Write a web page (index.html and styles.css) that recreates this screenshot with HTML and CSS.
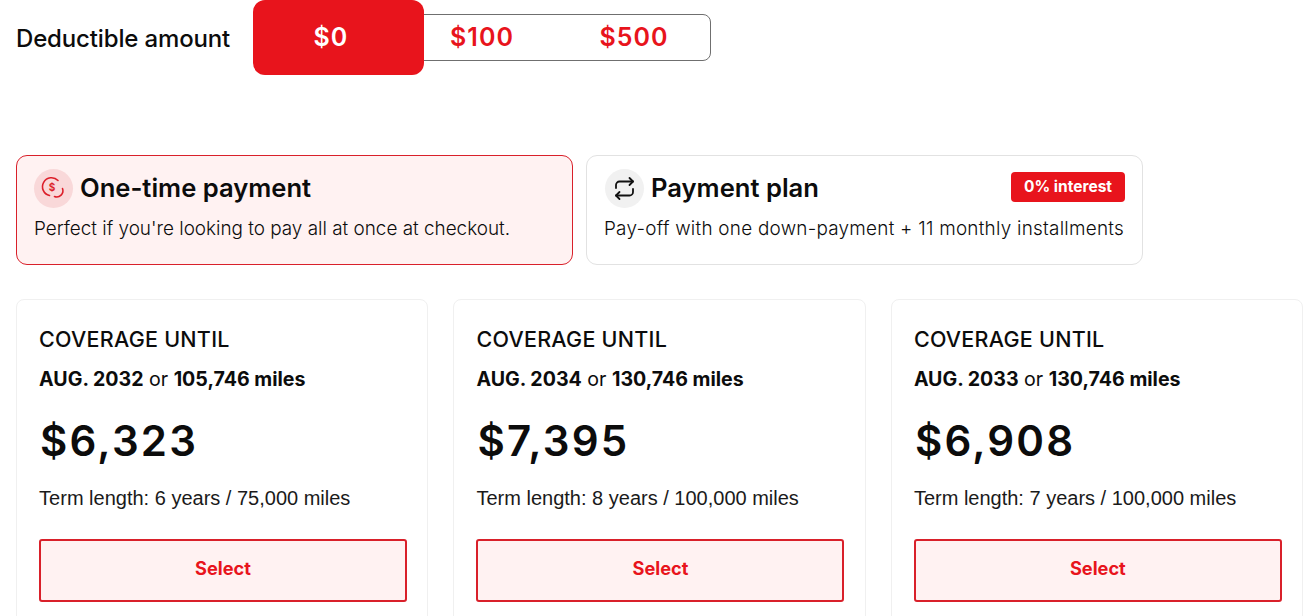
FILE: index.html
```html
<!DOCTYPE html>
<html lang="en">
<head>
<meta charset="utf-8">
<title>Coverage plans</title>
<link rel="stylesheet" href="styles.css">
</head>
<body>
<main class="page">
  <section class="deductible">
    <h2 class="deductible-label">Deductible amount</h2>
    <div class="segments">
      <button class="segment active"><span>$0</span></button>
      <button class="segment"><span>$100</span></button>
      <button class="segment"><span>$500</span></button>
    </div>
  </section>

  <section class="payment-options">
    <article class="payment selected">
      <div class="payment-head">
        <span class="icon-circle pink">
          <svg width="39" height="39" viewBox="0 0 39 39" fill="none" stroke="#dc1f2a" stroke-width="1.600" stroke-linecap="round">
            <path d="M24 11.500A9 9 0 1 0 15.500 26.500"/>
            <path d="M20.500 27.500A6.200 6.200 0 0 0 28.500 19.500"/>
            <text x="18" y="21.500" class="dollar">$</text>
          </svg>
        </span>
        <h3 class="payment-title">One-time payment</h3>
      </div>
      <p class="payment-text">Perfect if you're looking to pay all at once at checkout.</p>
    </article>
    <article class="payment">
      <div class="payment-head shifted">
        <span class="icon-circle grey">
          <svg width="39" height="39" viewBox="0 0 39 39" fill="none" stroke="#111" stroke-width="1.800" stroke-linecap="round" stroke-linejoin="round">
            <path d="M11 19v-3a3.500 3.500 0 0 1 3.500-3.500H28"/>
            <path d="M24.500 9l3.500 3.500-3.500 3.500"/>
            <path d="M28 20v3a3.500 3.500 0 0 1-3.500 3.500H11"/>
            <path d="M14.500 30L11 26.500 14.500 23"/>
          </svg>
        </span>
        <h3 class="payment-title">Payment plan</h3>
        <span class="badge">0% interest</span>
      </div>
      <p class="payment-text wide">Pay-off with one down-payment + 11 monthly installments</p>
    </article>
  </section>

  <section class="plans">
    <article class="plan">
      <h4 class="plan-title">COVERAGE UNTIL</h4>
      <p class="plan-until"><b>AUG. 2032</b> or <b>105,746 miles</b></p>
      <p class="plan-price">$6,323</p>
      <p class="plan-term">Term length: 6 years / 75,000 miles</p>
      <button class="select">Select</button>
    </article>
    <article class="plan">
      <h4 class="plan-title">COVERAGE UNTIL</h4>
      <p class="plan-until"><b>AUG. 2034</b> or <b>130,746 miles</b></p>
      <p class="plan-price">$7,395</p>
      <p class="plan-term">Term length: 8 years / 100,000 miles</p>
      <button class="select">Select</button>
    </article>
    <article class="plan">
      <h4 class="plan-title">COVERAGE UNTIL</h4>
      <p class="plan-until"><b>AUG. 2033</b> or <b>130,746 miles</b></p>
      <p class="plan-price">$6,908</p>
      <p class="plan-term">Term length: 7 years / 100,000 miles</p>
      <button class="select">Select</button>
    </article>
  </section>
</main>
</body>
</html>
```

FILE: styles.css
```css
* { box-sizing: border-box; }
html, body { margin: 0; height: 616px; overflow: hidden; background: #fff; }
body { font-family: "Inter", "Liberation Sans", sans-serif; color: #0c0c0c; }
h2, h3, h4, p { margin: 0; }
.page { padding: 0 3px 0 16px; }

.deductible { display: flex; align-items: flex-start; height: 155px; }
.deductible-label { width: 237px; margin-top: 24px; font-size: 24px; line-height: 30px; font-weight: 500; letter-spacing: -0.15px; }
.segments { display: grid; grid-template-columns: repeat(3, 152px); width: 458px; height: 47px; margin-top: 14px; border: 1px solid #6f6f6f; border-radius: 8px; }
.segment { position: relative; padding: 0; border: 0; background: none; font: 600 25px/45px "Inter", sans-serif; letter-spacing: 1px; color: #e8141c; }
.segment span { position: relative; }
.segment.active { color: #fff; }
.segment.active span { left: 1px; }
.segment.active::before { content: ""; position: absolute; left: -1px; right: -18px; top: -15px; bottom: -15px; background: #e8141c; border-radius: 12px; }

.payment-options { display: grid; grid-template-columns: 557px 557px; gap: 13px; }
.payment { height: 110px; padding: 13px 17px; border: 1px solid #e2e2e2; border-radius: 11px; }
.payment.selected { background: #fff2f2; border-color: #d9202a; }
.payment-head { display: flex; align-items: center; gap: 7px; height: 39px; }
.payment-head.shifted { padding-left: 1px; }
.icon-circle { flex: none; width: 39px; height: 39px; border-radius: 50%; display: block; }
.icon-circle svg { display: block; }
.pink { background: #f9d8d9; }
.grey { background: #f1f1f1; }
.dollar { font: 700 10px "Inter", sans-serif; text-anchor: middle; fill: #dc1f2a; stroke: none; }
.payment-title { padding-bottom: 2px; font-size: 25.600px; line-height: 30px; font-weight: 600; }
.badge { margin-left: auto; margin-bottom: 3px; width: 114px; height: 30px; background: #e8141c; color: #fff; border-radius: 4px; font-size: 15.500px; font-weight: 700; line-height: 30px; text-align: center; }
.payment-text { margin-top: 8px; font-size: 18.900px; line-height: 26px; font-weight: 300; }
.payment-text.wide { letter-spacing: 0.25px; }

.plans { display: grid; grid-template-columns: repeat(3, 412.400px); gap: 25px; margin-top: 34px; }
.plan { height: 340px; padding: 25px 20.400px 0 22.100px; border: 1px solid #f0f0f0; border-radius: 8px; }
.plan-title { font-size: 21.500px; line-height: 28px; font-weight: 500; letter-spacing: 0.25px; }
.plan-until { margin-top: 14px; font-size: 19.600px; line-height: 24px; }
.plan-until b { font-weight: 700; }
.plan-price { margin-top: 25px; margin-left: 1px; font-size: 42px; line-height: 50px; font-weight: 600; letter-spacing: 2.200px; }
.plan-term { margin-top: 18px; font: 400 20px/28px "Liberation Sans", sans-serif; color: #1a1a1a; }
.select { display: block; width: 100%; height: 63px; margin-top: 27px; padding-bottom: 7px; background: #fff2f2; border: 2px solid #d9202a; border-radius: 3px; color: #e8141c; font: 700 18.200px "Inter", sans-serif; }
```
